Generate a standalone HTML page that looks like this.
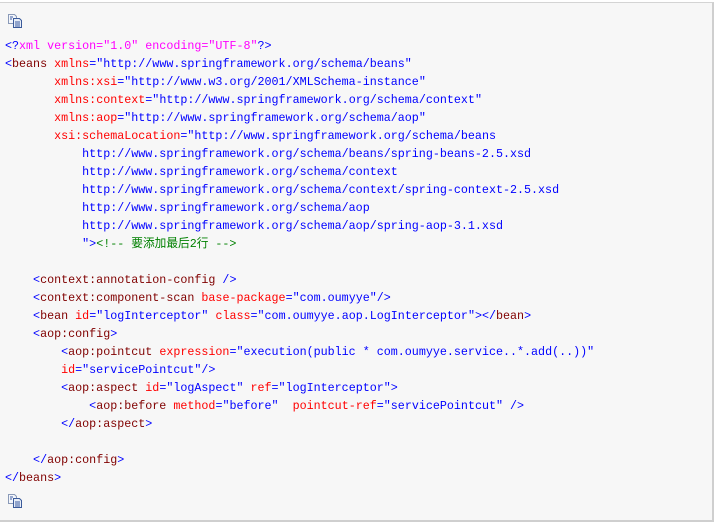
<!DOCTYPE html>
<html><head><meta charset="utf-8"><style>
html,body{margin:0;padding:0;background:#fff;}
.box{position:absolute;left:0;top:2px;width:712px;height:517px;background:#f7f7f7;border-top:1px solid #d4d4d4;border-right:2px solid #cfcfcf;border-bottom:2px solid #cfcfcf;}
pre{position:absolute;left:5px;top:37px;margin:0;font-family:"Liberation Mono","Noto Sans CJK SC",monospace;font-size:11.7px;line-height:18px;color:#0000ff;}
.t{color:#800000}.a{color:#ff0000}.m{color:#ff00ff}.c{color:#008000}
.ic{position:absolute;left:7px;}
</style></head><body>
<div class="box"></div>
<svg class="ic" style="top:14px" width="16" height="14" viewBox="0 0 16 14"><path d="M1.5 0.5h6l2 2v7h-8z" fill="#f4f6fb" stroke="#8a9ab8"/><path d="M6.5 4.5h6l2 2v7h-8z" fill="#e8eef8" stroke="#3a5a9a"/><path d="M8 8h5M8 10h5M8 12h5M3 3h3M3 5h2" stroke="#3a5aa0"/></svg>
<pre><span>&lt;?</span><span class="m">xml version="1.0" encoding="UTF-8"</span>?&gt;
&lt;<span class="t">beans</span> <span class="a">xmlns</span>="http://www.springframework.org/schema/beans"
       <span class="a">xmlns:xsi</span>="http://www.w3.org/2001/XMLSchema-instance"
       <span class="a">xmlns:context</span>="http://www.springframework.org/schema/context"
       <span class="a">xmlns:aop</span>="http://www.springframework.org/schema/aop"
       <span class="a">xsi:schemaLocation</span>="http://www.springframework.org/schema/beans
           http://www.springframework.org/schema/beans/spring-beans-2.5.xsd
           http://www.springframework.org/schema/context
           http://www.springframework.org/schema/context/spring-context-2.5.xsd
           http://www.springframework.org/schema/aop
           http://www.springframework.org/schema/aop/spring-aop-3.1.xsd
           "&gt;<span class="c">&lt;!-- 要添加最后2行 --&gt;</span>

    &lt;<span class="t">context:annotation-config</span> /&gt;
    &lt;<span class="t">context:component-scan</span> <span class="a">base-package</span>="com.oumyye"/&gt;
    &lt;<span class="t">bean</span> <span class="a">id</span>="logInterceptor" <span class="a">class</span>="com.oumyye.aop.LogInterceptor"&gt;&lt;/<span class="t">bean</span>&gt;
    &lt;<span class="t">aop:config</span>&gt;
        &lt;<span class="t">aop:pointcut</span> <span class="a">expression</span>="execution(public * com.oumyye.service..*.add(..))"
        <span class="a">id</span>="servicePointcut"/&gt;
        &lt;<span class="t">aop:aspect</span> <span class="a">id</span>="logAspect" <span class="a">ref</span>="logInterceptor"&gt;
            &lt;<span class="t">aop:before</span> <span class="a">method</span>="before"  <span class="a">pointcut-ref</span>="servicePointcut" /&gt;
        &lt;/<span class="t">aop:aspect</span>&gt;

    &lt;/<span class="t">aop:config</span>&gt;
&lt;/<span class="t">beans</span>&gt;</pre>
<svg class="ic" style="top:494px" width="16" height="14" viewBox="0 0 16 14"><path d="M1.5 0.5h6l2 2v7h-8z" fill="#f4f6fb" stroke="#8a9ab8"/><path d="M6.5 4.5h6l2 2v7h-8z" fill="#e8eef8" stroke="#3a5a9a"/><path d="M8 8h5M8 10h5M8 12h5M3 3h3M3 5h2" stroke="#3a5aa0"/></svg>
</body></html>
